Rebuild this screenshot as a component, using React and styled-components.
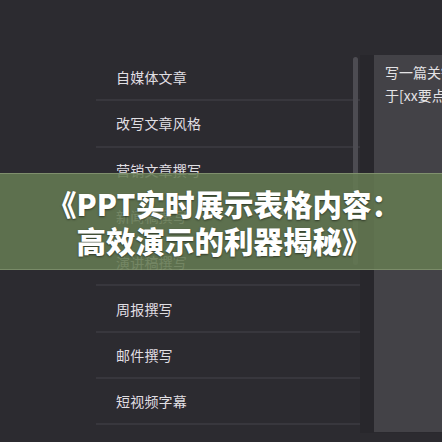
import styled, { createGlobalStyle } from "styled-components";

const items = [
  "自媒体文章",
  "改写文章风格",
  "营销文章撰写",
  "新闻稿撰写",
  "演讲稿撰写",
  "周报撰写",
  "邮件撰写",
  "短视频字幕",
];

const App = () => {
  return (
    <>
      <GlobalStyle />
      <Page>
        <Content>
          <MenuWrap>
            <Menu>
              {items.map((item) => (
                <Row key={item}>
                  <span>{item}</span>
                </Row>
              ))}
            </Menu>
            <Thumb />
          </MenuWrap>
          <Track />
          <Panel>
            <Line>写一篇关键的自媒体文章，主题</Line>
            <Line>于[xx要点]展开</Line>
          </Panel>
        </Content>
        <Banner>
          <Title>
            <span>《PPT实时展示表格内容：</span>
            <span>高效演示的利器揭秘》</span>
          </Title>
        </Banner>
      </Page>
    </>
  );
};

const GlobalStyle = createGlobalStyle`
  html, body {
    margin: 0;
    padding: 0;
    background: #2c2b30;
    overflow: hidden;
  }
  * {
    box-sizing: border-box;
  }
`;

const Page = styled.div`
  position: relative;
  width: 442px;
  height: 442px;
  overflow: hidden;
  background: #2c2b30;
  font-family: "Noto Sans CJK SC", "Noto Sans", sans-serif;
`;

const Content = styled.div`
  display: flex;
  padding-top: 55px;
  padding-left: 96px;
`;

const MenuWrap = styled.div`
  position: relative;
  width: 264px;
  flex-shrink: 0;
`;

const Menu = styled.div`
  display: flex;
  flex-direction: column;
`;

const Row = styled.div`
  height: 46.3px;
  display: flex;
  align-items: center;
  padding-left: 20px;
  border-bottom: 2px solid #38373d;
  span {
    font-size: 14px;
    color: #e0dfe3;
    letter-spacing: 0.2px;
  }
`;

const Thumb = styled.div`
  position: absolute;
  top: 2px;
  left: 257px;
  width: 5px;
  height: 208px;
  border-radius: 3px;
  background: #4d4c52;
`;

const Track = styled.div`
  width: 14px;
  height: 378px;
  background: #28272c;
  flex-shrink: 0;
`;

const Panel = styled.div`
  width: 200px;
  height: 377px;
  flex-shrink: 0;
  background: #434247;
  padding: 6px 0 0 11px;
  box-shadow: 0 1px 0 #2a292e;
`;

const Line = styled.div`
  font-size: 14px;
  line-height: 23px;
  color: #e4e3e6;
  white-space: nowrap;
`;

const Banner = styled.div`
  position: absolute;
  left: 0;
  right: 0;
  top: 173px;
  height: 97px;
  background: rgba(100, 122, 82, 0.88);
  border-top: 1px solid rgba(150, 165, 130, 0.6);
  border-bottom: 1px solid rgba(150, 165, 130, 0.5);
  display: flex;
  align-items: center;
  justify-content: center;
`;

const Title = styled.div`
  display: flex;
  flex-direction: column;
  align-items: center;
  font-size: 29.5px;
  font-weight: 900;
  line-height: 37px;
  color: #ffffff;
  text-shadow: 0 1px 2px rgba(0, 0, 0, 0.5);
  padding-left: 6px;
`;

export default App;
